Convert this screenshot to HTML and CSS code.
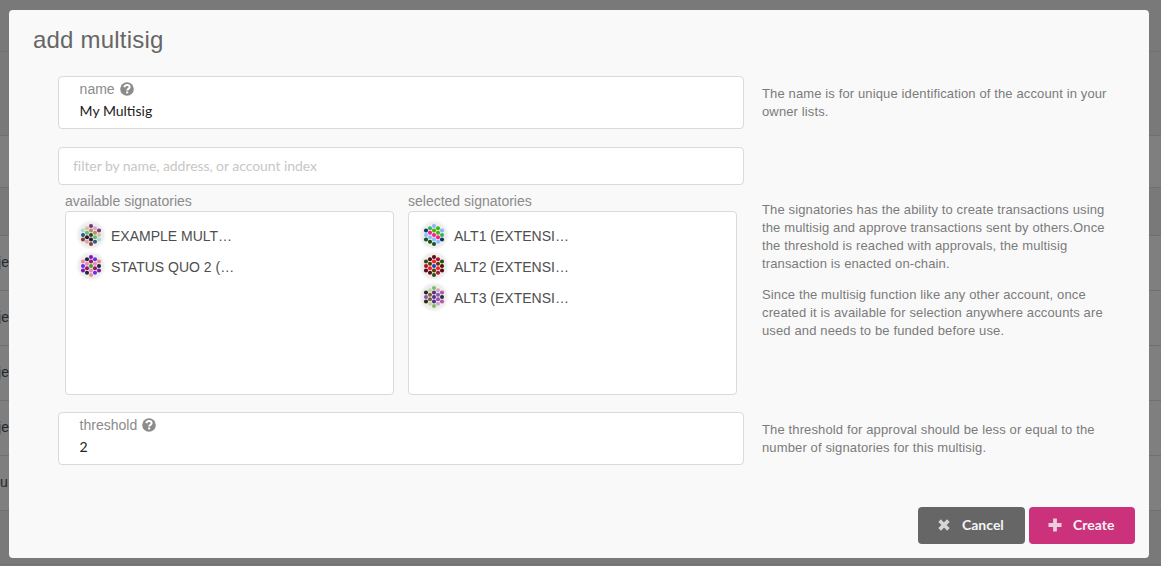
FILE: index.html
```
<!DOCTYPE html>
<html lang="en">
<head>
<meta charset="utf-8">
<title>add multisig</title>
<link rel="stylesheet" href="styles.css">
</head>
<body>
<div class="page" aria-hidden="true">
  <div class="band band-top"></div>
  <div class="band band-summary"></div>
  <div class="band band-filter"></div>
  <div class="band band-head"></div>
  <div class="band row"><span>je</span></div>
  <div class="band row"><span>je</span></div>
  <div class="band row"><span>je</span></div>
  <div class="band row"><span>je</span></div>
  <div class="band row"><span>u</span></div>
  <div class="band band-end"></div>
</div>
<svg class="defs" width="0" height="0"><defs>
  <symbol id="help" viewBox="0 0 14 14"><circle cx="7" cy="7" r="6.8" fill="#8b8b8b"/><path d="M4.3 5.3C4.6 3.9 5.6 3.1 7 3.1c1.5 0 2.6.9 2.6 2.1 0 1.7-2.4 1.7-2.4 3.3" fill="none" stroke="#fff" stroke-width="2"/><rect x="6.1" y="9.5" width="2.1" height="1.9" fill="#fff"/></symbol>
</defs></svg>
<main class="modal">
  <h1>add multisig</h1>
  <div class="content">
    <section class="line">
      <div class="field"><label>name<svg class="help"><use href="#help"/></svg></label><div class="value">My Multisig</div></div>
      <aside class="note note-field"><p>The name is for unique identification of the account in your owner lists.</p></aside>
    </section>
    <section class="line line-lists">
      <div class="picker">
        <div class="search">filter by name, address, or account index</div>
        <div class="lists">
          <div class="group"><label>available signatories</label><div class="list">
            <div class="account"><svg class="ident" data-c="7b2f80 b98f55 1f4438 33122b 80403a dcc09c 62bd70 33122b dba8a0 d3a7dd b98f55 62bd70 2f5580 a8dcd9 2f5580 80403a 7b2f80 dcc09c a8dcd9"></svg><span>EXAMPLE MULT…</span></div>
            <div class="account"><svg class="ident" data-c="8417a0 a01557 4ba017 e58cc5 f08c85 17294f e58cc5 a01557 17294f 6a2fee e58cc5 a01557 6a2fee f08c85 6a2fee 8417a0 f08c85 17294f 8417a0"></svg><span>STATUS QUO 2 (…</span></div>
          </div></div>
          <div class="group"><label>selected signatories</label><div class="list">
            <div class="account"><svg class="ident" data-c="8db2ff 46b80c ff1a8c 85c0ff 17502b 30b85a ff1a8c 85c0ff 1d5008 46b80c 46b80c ff1a8c 85c0ff 0d3860 85c0ff 17502b 8db2ff 30b85a 0d3860"></svg><span>ALT1 (EXTENSI…</span></div>
            <div class="account"><svg class="ident" data-c="550d10 ff1a30 2042b8 504008 2a5008 550d10 504008 ff1a30 550d10 b80c35 504008 ff1a30 b80c35 2a5008 b80c35 550d10 2a5008 550d10 550d10"></svg><span>ALT2 (EXTENSI…</span></div>
            <div class="account"><svg class="ident" data-c="7cbd62 553285 553285 553285 7cbd62 bedca8 805f40 805f40 bedca8 d3a7c4 8f55b9 8f55b9 d3a7c4 33261b 8655b9 33261b b955a5 21333b b955a5"></svg><span>ALT3 (EXTENSI…</span></div>
          </div></div>
        </div>
      </div>
      <aside class="note note-lists"><p>The signatories has the ability to create transactions using the multisig and approve transactions sent by others.Once the threshold is reached with approvals, the multisig transaction is enacted on-chain.</p><p>Since the multisig function like any other account, once created it is available for selection anywhere accounts are used and needs to be funded before use.</p></aside>
    </section>
    <section class="line">
      <div class="field"><label>threshold<svg class="help"><use href="#help"/></svg></label><div class="value">2</div></div>
      <aside class="note note-field"><p>The threshold for approval should be less or equal to the number of signatories for this multisig.</p></aside>
    </section>
  </div>
  <footer class="actions">
    <button class="btn cancel"><svg viewBox="0 0 14 14"><path d="M3.9 3.9l6.2 6.2M10.1 3.9l-6.2 6.2" stroke="currentColor" stroke-width="3.6" stroke-linecap="square"/></svg>Cancel</button>
    <button class="btn create"><svg viewBox="0 0 14 14"><path d="M7 .5v13M.5 7h13" stroke="currentColor" stroke-width="3.8"/></svg>Create</button>
  </footer>
</main>
<script src="identicons.js"></script>
</body>
</html>
```
FILE: styles.css
```
* { box-sizing: border-box; }
body { margin: 0; height: 566px; overflow: hidden; background: #797979; font-family: "Liberation Sans", Arial, sans-serif; font-size: 14px; color: #4e4e4e; }
.page { height: 566px; }
.band { border-bottom: 1px solid #6f6f6f; background: #797979; }
.band-top { height: 52px; }
.band-summary { height: 84px; }
.band-filter { height: 52px; background: #7f7f7f; }
.band-head { height: 48px; }
.row { height: 55px; background: #7f7f7f; display: flex; align-items: center; padding-bottom: 3px; color: #27272c; }
.row span { width: 9px; display: flex; justify-content: flex-end; }
.row:nth-child(9) span { justify-content: flex-start; }
.band-end { height: 54px; }
.defs { position: absolute; }
.modal { position: absolute; left: 9px; top: 10px; width: 1140px; height: 548px; background: #f9f9f9; border-radius: 4px; padding: 15px 14px 14px 25px; display: flex; flex-direction: column; }
h1 { margin: 0 0 0 -1px; height: 51px; font-size: 24px; line-height: 29px; font-weight: 400; letter-spacing: .2px; color: #666; }
.content { padding-left: 24px; flex: 1; }
.line { display: flex; gap: 18px; }
.field { width: 686px; height: 53px; background: #fff; border: 1px solid #dadadb; border-radius: 4px; padding: 4px 20.6px; }
label { display: flex; align-items: center; height: 16px; line-height: 16px; color: #8b8b8b; }
.help { width: 14px; height: 14px; margin-left: 5px; }
.value { font: 14px/17px Lato, sans-serif; color: #212121; margin-top: 5px; }
.line-lists { margin: 18px 0 17px; }
.picker { width: 686px; }
.search { height: 38px; border: 1px solid #dadadb; border-radius: 4px; background: #fff; padding: 0 14px; font: 14px/36px Lato, sans-serif; letter-spacing: -.06px; color: #c7c7c7; }
.lists { display: flex; gap: 14px; padding: 8px 7px 0; }
.group { width: 329px; }
.group label { height: 18px; line-height: 16px; align-items: flex-start; }
.list { height: 184px; background: #fff; border: 1px solid #dadadb; border-radius: 4px; padding: 7px 12px; }
.account { display: flex; align-items: center; height: 31px; gap: 7px; }
.account span { padding-top: 2px; }
.ident { width: 26px; height: 26px; border-radius: 50%; background: #eee; box-shadow: 0 0 3px 1px #f3f3f3; }
.note { width: 355px; color: #7b7b7b; font-size: 13px; line-height: 18px; letter-spacing: .13px; }
.note p { margin: 0 0 13px; }
.note-field { padding-top: 9px; height: 53px; }
.note-lists { padding-top: 54px; }
.actions { display: flex; justify-content: flex-end; gap: 4px; }
.btn { width: 107px; height: 37px; border: 0; border-radius: 4px; display: flex; align-items: center; padding: 0 0 2px 19px; gap: 11px; font: 700 14px Lato, sans-serif; color: #f4f4f4; background: #666; }
.btn svg { width: 14px; height: 14px; opacity: .8; }
.btn.create { width: 106px; background: #cb327b; }
```
FILE: identicons.js
```
// Nineteen dots in a hexagon, column by column.
const columns = [[0, 5], [-4, 4], [4, 4], [-8, 3], [8, 3]];
document.querySelectorAll('.ident').forEach((svg) => {
  const colors = svg.dataset.c.split(' ');
  let i = 0;
  svg.setAttribute('viewBox', '-13 -13 26 26');
  columns.forEach(([x, count]) => {
    for (let k = 0; k < count; k++) {
      const dot = document.createElementNS('http://www.w3.org/2000/svg', 'circle');
      dot.setAttribute('cx', x);
      dot.setAttribute('cy', (k - (count - 1) / 2) * 4.5);
      dot.setAttribute('r', 2.05);
      dot.setAttribute('fill', '#' + colors[i++]);
      svg.appendChild(dot);
    }
  });
});
```
